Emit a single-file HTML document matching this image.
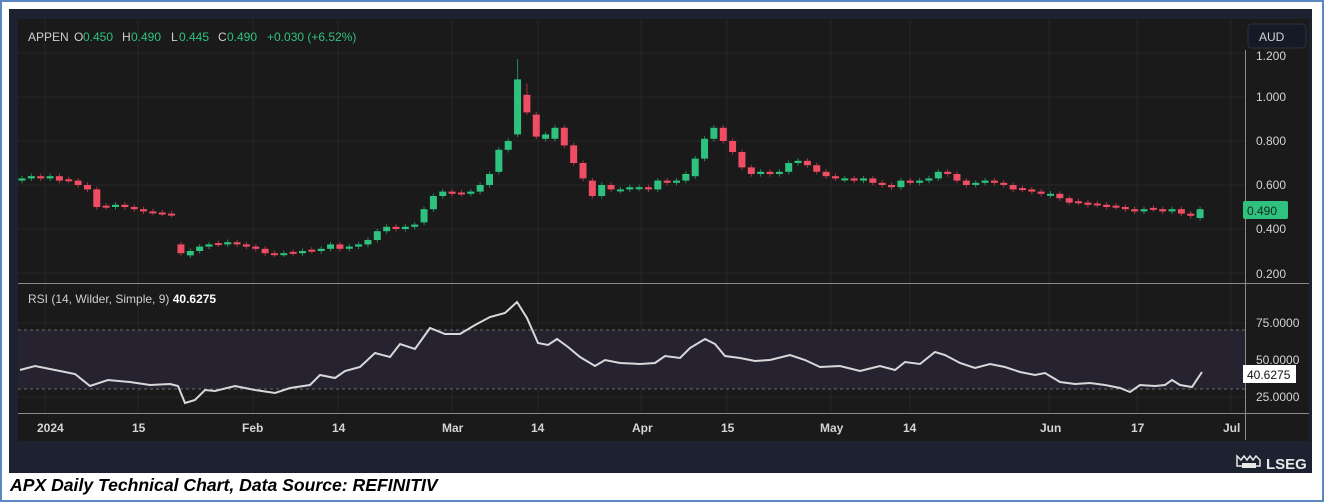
<!DOCTYPE html>
<html><head><meta charset="utf-8"><style>
*{margin:0;padding:0;box-sizing:border-box}
body{width:1324px;height:502px;background:#fff;position:relative;overflow:hidden;font-family:"Liberation Sans",sans-serif}
.frame{position:absolute;left:0;top:0;width:1324px;height:502px;border:2px solid #5b86c0}
.panel{position:absolute;left:9px;top:9px;width:1303px;height:464px;background:#1c2230}
.chart{position:absolute;left:18px;top:19px;width:1291px;height:422px;background:#1a1a1a}
.cap{position:absolute;left:10px;top:475px;font:italic bold 17.6px "Liberation Sans",sans-serif;color:#000}
</style></head><body>
<div class="frame"></div>
<div class="panel"></div>
<div class="chart"></div>
<svg id="s" width="1324" height="502" style="position:absolute;left:0;top:0" font-family="Liberation Sans, sans-serif">
<g stroke="#262626" stroke-width="1">
<line x1="45" y1="20" x2="45" y2="413"/><line x1="138" y1="20" x2="138" y2="413"/><line x1="253" y1="20" x2="253" y2="413"/><line x1="338" y1="20" x2="338" y2="413"/><line x1="452" y1="20" x2="452" y2="413"/><line x1="538" y1="20" x2="538" y2="413"/><line x1="641" y1="20" x2="641" y2="413"/><line x1="727" y1="20" x2="727" y2="413"/><line x1="831" y1="20" x2="831" y2="413"/><line x1="910" y1="20" x2="910" y2="413"/><line x1="1049" y1="20" x2="1049" y2="413"/><line x1="1137" y1="20" x2="1137" y2="413"/><line x1="1231" y1="20" x2="1231" y2="413"/>
<line x1="18" y1="53" x2="1245" y2="53"/><line x1="18" y1="97" x2="1245" y2="97"/><line x1="18" y1="141" x2="1245" y2="141"/><line x1="18" y1="185" x2="1245" y2="185"/><line x1="18" y1="229" x2="1245" y2="229"/><line x1="18" y1="273" x2="1245" y2="273"/>
<line x1="18" y1="323" x2="1245" y2="323"/><line x1="18" y1="360" x2="1245" y2="360"/><line x1="18" y1="397" x2="1245" y2="397"/>
</g>
<rect x="18" y="330" width="1227" height="59" fill="#262230"/>
<g stroke="#6a6a6a" stroke-dasharray="3,3"><line x1="18" y1="330" x2="1245" y2="330"/><line x1="18" y1="389" x2="1245" y2="389"/></g>
<g stroke="#8a8a8a"><line x1="18" y1="283.5" x2="1309" y2="283.5"/><line x1="18" y1="413.5" x2="1309" y2="413.5"/><line x1="1245.5" y1="50" x2="1245.5" y2="440"/></g>
<g id="c"></g>
<polyline id="rsi" fill="none" stroke="#d8d8d8" stroke-width="2" points=""/>
<g font-size="12" fill="#d4d4d4">
<text x="1256" y="60">1.200</text><text x="1256" y="101">1.000</text><text x="1256" y="145">0.800</text><text x="1256" y="189">0.600</text><text x="1256" y="233">0.400</text><text x="1256" y="278">0.200</text>
<text x="1256" y="327">75.0000</text><text x="1256" y="364">50.0000</text><text x="1256" y="401">25.0000</text>
<text x="37" y="432" font-weight="bold">2024</text><text x="132" y="432" font-weight="bold">15</text><text x="242" y="432" font-weight="bold">Feb</text><text x="332" y="432" font-weight="bold">14</text><text x="442" y="432" font-weight="bold">Mar</text><text x="531" y="432" font-weight="bold">14</text><text x="632" y="432" font-weight="bold">Apr</text><text x="721" y="432" font-weight="bold">15</text><text x="820" y="432" font-weight="bold">May</text><text x="903" y="432" font-weight="bold">14</text><text x="1040" y="432" font-weight="bold">Jun</text><text x="1131" y="432" font-weight="bold">17</text><text x="1223" y="432" font-weight="bold">Jul</text>
</g>
<rect x="1248" y="24" width="58" height="24" rx="4" fill="#151a26" stroke="#2c3140"/>
<text x="1259" y="41" font-size="12" fill="#d4d4d4">AUD</text>
<rect x="1243" y="201" width="45" height="18" rx="2" fill="#2fc27e"/>
<text x="1247" y="215" font-size="12" fill="#0f2a1b">0.490</text>
<rect x="1243" y="365" width="53" height="18" fill="#fff"/>
<text x="1247" y="379" font-size="12" fill="#111">40.6275</text>
<g font-size="12">
<text x="28" y="41" fill="#cfcfcf">APPEN</text><text x="74" y="41" fill="#cfcfcf">O</text><text x="83" y="41" fill="#2fc27e">0.450</text>
<text x="122" y="41" fill="#cfcfcf">H</text><text x="131" y="41" fill="#2fc27e">0.490</text>
<text x="171" y="41" fill="#cfcfcf">L</text><text x="179" y="41" fill="#2fc27e">0.445</text>
<text x="218" y="41" fill="#cfcfcf">C</text><text x="227" y="41" fill="#2fc27e">0.490</text>
<text x="267" y="41" fill="#2fc27e">+0.030 (+6.52%)</text>
</g>
<text x="28" y="303" font-size="12"><tspan fill="#cfcfcf">RSI (14, Wilder, Simple, 9)  </tspan><tspan fill="#fff" font-weight="bold">40.6275</tspan></text>
<g fill="#e8e8e8" stroke="#e8e8e8"><path d="M1237 456l4 4 3-4 3 4 3-4 3 4 3-4 4 4v6h-23z" fill="none" stroke-width="1.5"/><rect x="1242" y="463" width="14" height="5" stroke="none"/></g>
<text x="1266" y="469" font-size="15" font-weight="bold" fill="#e8e8e8">LSEG</text>
</svg>
<div class="cap">APX Daily Technical Chart, Data Source: REFINITIV</div>
<script>
var C=[.63,.64,.63,.64,.62,.62,.60,.58,.50,.50,.51,.50,.49,.48,.475,.47,.465,.29,.30,.32,.33,.33,.34,.33,.32,.31,.29,.285,.29,.29,.30,.30,.31,.33,.31,.32,.33,.35,.39,.41,.40,.41,.42,.49,.55,.57,.56,.56,.57,.60,.65,.76,.80,1.08,.93,.82,.83,.86,.78,.70,.63,.55,.60,.58,.58,.59,.59,.58,.62,.61,.62,.65,.72,.81,.86,.80,.75,.68,.65,.66,.65,.66,.70,.71,.69,.66,.64,.63,.63,.62,.63,.61,.60,.59,.62,.61,.62,.63,.66,.65,.62,.60,.61,.62,.61,.60,.58,.58,.57,.56,.56,.54,.52,.52,.51,.51,.50,.50,.49,.48,.49,.49,.48,.49,.47,.46,.49];
var O={17:.33,18:.28,53:.83,54:1.01,55:.92,56:.81,57:.81,61:.62,72:.64,126:.45,43:.43,51:.66};
var y=function(p){return 97+(1-p)*220};var h='';
for(var i=0;i<C.length;i++){var x=22+9.35*i,c=C[i],o=(i in O)?O[i]:(i?C[i-1]:.62);if(Math.abs(o-c)<.004)o=c+(i%2?.006:-.006);
var up=c>=o,col=up?'#2fc27e':'#ef4d64',hi=Math.max(o,c)+.012+(i==53?.08:0)+(i==54?.04:0),lo=Math.min(o,c)-.012;
var t=y(Math.max(o,c)),b=y(Math.min(o,c));
h+='<line x1="'+x+'" x2="'+x+'" y1="'+y(hi)+'" y2="'+y(lo)+'" stroke="'+(up?'#1e8a58':'#a83446')+'"/>';
h+='<rect x="'+(x-3.5)+'" y="'+t+'" width="7" height="'+Math.max(2,b-t)+'" fill="'+col+'"/>';}
document.getElementById('c').innerHTML=h;
var R="20,370 35,366 55,370 75,374 90,386 108,380 130,382 150,385 170,384 178,386 185,403 195,400 205,390 215,391 235,386 255,390 275,393 290,388 310,385 320,375 335,378 345,371 360,367 375,353 390,357 400,344 415,349 430,328 445,334 460,334 475,325 490,317 505,313 517,302 527,318 538,343 548,345 557,339 568,347 580,357 595,366 605,360 620,363 640,364 655,363 665,356 680,358 690,348 705,339 715,344 725,356 740,358 755,361 770,360 790,355 805,360 820,367 840,366 860,371 880,366 895,370 905,362 920,364 935,352 945,355 960,363 975,368 990,364 1005,367 1020,372 1035,375 1045,373 1060,382 1075,384 1090,383 1105,385 1120,388 1130,392 1140,385 1155,386 1165,385 1172,380 1180,385 1192,387 1202,372";
document.getElementById('rsi').setAttribute('points',R);
</script>
</body></html>
